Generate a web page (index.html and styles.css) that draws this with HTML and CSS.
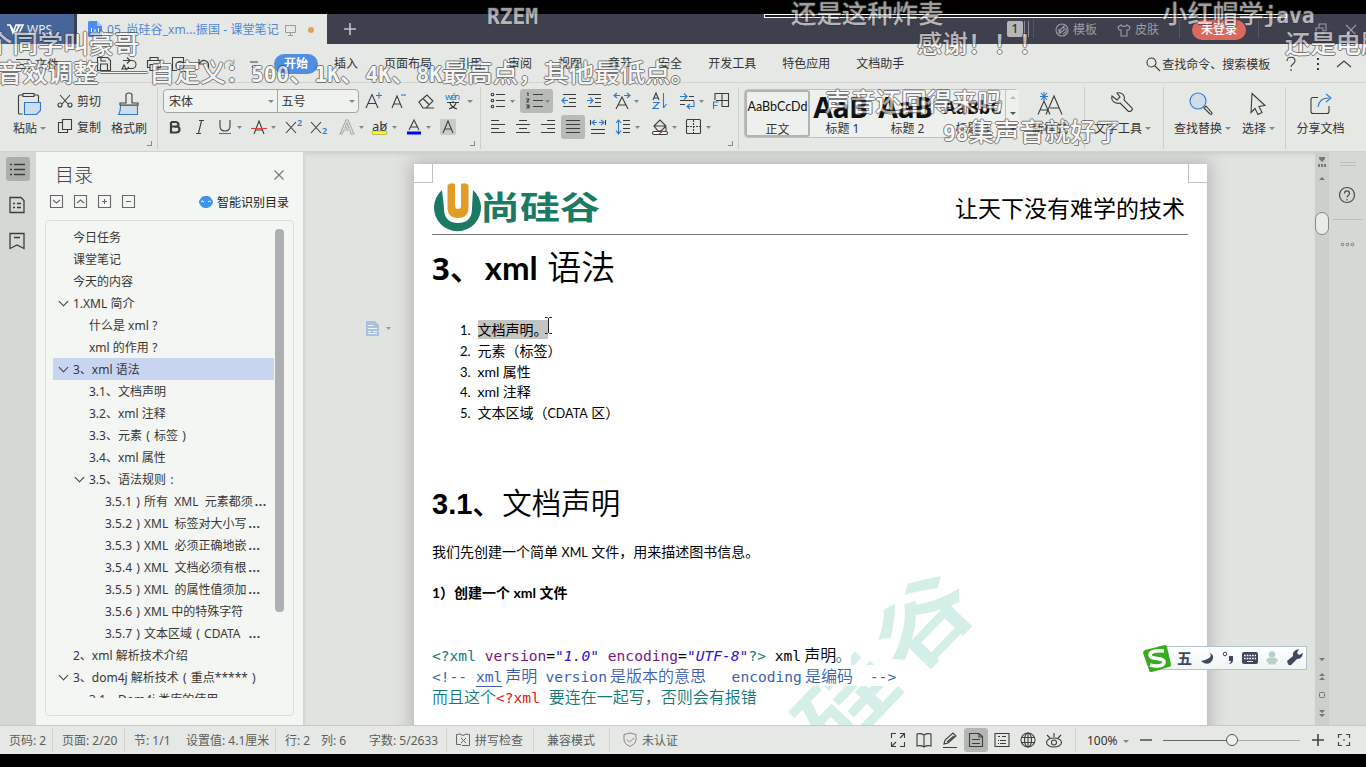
FILE: index.html
```html
<!DOCTYPE html>
<html lang="zh-CN">
<head>
<meta charset="utf-8">
<title>05_尚硅谷_xml - 课堂笔记</title>
<link rel="stylesheet" href="styles.css">
</head>
<body>
<div class="screen">
  <header class="titlebar">
    <div class="brand"><svg class="ic" viewBox="-12 -12 24 24"><path class="wl" d="M-8-4h3l3 8 3-8h3l-3 8M-5-4l5 8 5-8h3l-4 8"/></svg><span>WPS</span></div>
    <div class="doctab">
      <svg class="docicon" viewBox="0 0 14 16"><path fill="#4c8bf0" d="M1 0h8l5 5v11H1a1 1 0 0 1-1-1V1z"/><path fill="#a9c8fa" d="M9 0l5 5H9z"/><path d="M3.500 7v4.500h7V7M7 8v3" fill="none" stroke="#fff"/></svg>
      <span class="docname">05_尚硅谷_xm...振国 - 课堂笔记</span>
      <svg class="monitor" viewBox="0 0 12 12"><path d="M.5 1.500h10v7H.5zM5.500 8.500v2.500M3 11.500h5" fill="none" stroke="#999b99"/></svg>
      <i class="dirty"></i>
    </div>
    <svg class="plus" viewBox="0 0 12 12"><path d="M6 0v12M0 6h12" stroke="#c4c5c8" stroke-width="1.600"/></svg>
    <div class="titleright">
      <b class="badge">1</b><i class="bars"></i><i class="tsep"></i>
      <svg class="ic" viewBox="-12 -12 24 24"><circle r="6"/><path d="M-2 4v-4l4-4v4l-4 3M-3-1v4M4-2v4l-3 2"/></svg><span>模板</span>
      <svg class="ic shirt" viewBox="-12 -12 24 24"><path d="M-3-5l-3 2 1 3h2v6h6v-6h2l1-3-3-2q-3 3-6 0z"/></svg><span>皮肤</span>
      <i class="tsep s2"></i><b class="login">未登录</b><i class="tsep s3"></i>
      <svg class="ic restore" viewBox="-12 -12 24 24"><path d="M-5-2h7v7h-7zM-2-2v-4h7v7h-3"/></svg>
      <svg class="ic close" viewBox="-12 -12 24 24"><path d="M-5-5l10 10M5-5l-10 10"/></svg>
    </div>
  </header>

  <nav class="menubar">
    <svg class="ic" viewBox="-12 -12 24 24"><path d="M-7-4.500h14M-7 .5h14M-7 4.500h14"/></svg><span class="file">文件</span>
    <i class="msep"></i>
    <div class="quick">
      <svg class="ic" viewBox="-12 -12 24 24"><path d="M-6.500-6.500h10l3 3v10h-13zM-3.500 6v-6h7v6M-3-6v3h5"/></svg>
      <svg class="ic" viewBox="-12 -12 24 24"><path d="M-6-3.500h9a4 4 0 0 1 0 8h-4M-2-6.500l3 3-3 3M-5 1l-2 4h4zM-3 6l3-3"/></svg>
      <svg class="ic" viewBox="-12 -12 24 24"><path d="M-4-3v-3.500h8v3M-4 3.500h-2.500v-7h13v7h-2.500M-4 .5h8v6h-8z"/></svg>
      <svg class="ic" viewBox="-12 -12 24 24"><path d="M-2 6.500h-4.500v-13h11v6M3 5l4 3"/><circle cx="1" cy="1.500" r="4"/></svg>
      <svg class="ic" viewBox="-12 -12 24 24"><path d="M-5-5v5h5M-5 0q3-5 7-3t2 8"/></svg>
      <svg class="ic dim" viewBox="-12 -12 24 24"><path d="M5-5v5h-5M5 0q-3-5-7-3t-2 8"/></svg>
      <svg class="ic" viewBox="-12 -12 24 24"><path d="M-4-2h8M-2 2l2 2 2-2"/></svg>
    </div>
    <div class="tabs"><span class="on">开始</span><span>插入</span><span>页面布局</span><span>引用</span><span>审阅</span><span>视图</span><span>章节</span><span>安全</span><span>开发工具</span><span>特色应用</span><span>文档助手</span></div>
    <div class="search"><svg class="ic" viewBox="-12 -12 24 24"><circle cx="-1.500" cy="-1.500" r="4.500"/><path d="M2 2l5 5"/></svg><span>查找命令、搜索模板</span></div>
    <svg class="ic help" viewBox="-12 -12 24 24"><path d="M-4-3c0-5 8-5 8 0 0 3-4 3-4 6M0 5v2"/></svg>
    <svg class="ic dots" viewBox="-12 -12 24 24"><path d="M0-6v2M0-1v2M0 4v2" stroke-width="2"/></svg>
    <svg class="ic up" viewBox="-12 -12 24 24"><path d="M-7 3l7-6 7 6"/></svg>
  </nav>

  <section class="ribbon">
    <div class="group clip">
      <div class="big paste"><svg class="ic" viewBox="-12 -12 24 24"><path d="M-6-9h-3.500q-1 0-1 1v17q0 1 1 1h3M5-9h3.500q1 0 1 1v6M-6-10.500h11v3h-11z"/><path class="bl fl" d="M-4.500-1.500h16v8l-4 4h-12z"/></svg><span>粘贴<i class="caret"></i></span></div>
      <div class="small">
        <div><svg class="ic" viewBox="-12 -12 24 24"><path d="M-5-6l8 9M5-6l-8 9"/><circle cx="-5" cy="4" r="2"/><circle cx="5" cy="4" r="2"/></svg><span>剪切</span></div>
        <div><svg class="ic" viewBox="-12 -12 24 24"><path d="M-2.500-7.500h9v10h-9zM-2.500-4.500h-4v10h9V2.500"/></svg><span>复制</span></div>
      </div>
      <div class="big brush"><svg class="ic" viewBox="-12 -12 24 24"><path d="M-9 1v-2h6v-8q0-2 3-2t3 2v8h6v2z"/><path class="bl fl" d="M-8.500 1.500h17v9h-19q2-3 2-9z"/></svg><span>格式刷</span></div>
      <i class="corner"></i>
    </div>

    <div class="group font">
      <div class="line">
        <div class="combos"><span class="cn">宋体<i class="caret"></i></span><span>五号<i class="caret"></i></span></div>
        <div class="tools f1">
          <svg class="ic" viewBox="-12 -12 24 24"><path d="M-8 7L-2-6.500 4 7M-6 2.500h8"/><path class="bl" d="M2-5.500h6M5-8.500v6"/></svg>
          <svg class="ic" viewBox="-12 -12 24 24"><path d="M-7 7L-2-5 3 7M-5 3h6"/><path class="bl" d="M2-6h5"/></svg>
          <svg class="ic" viewBox="-12 -12 24 24"><path d="M-7 1l8-7 6 6-7 7h-3zM-3-2.500l6 6M-2 7h10"/></svg>
          <svg class="ic" viewBox="-12 -12 24 24"><text class="wen" x="-8" y="-1" textLength="15">wén</text><path d="M-6 1.500H6M0 0v2M-4 8q6-2 7-6M4 8q-6-2-7-6"/><path class="ct" d="M14-1h6l-3 3z"/></svg>
        </div>
      </div>
      <div class="tools f2">
        <svg class="ic" viewBox="-12 -12 24 24"><path stroke-width="2.200" d="M-4-5v10.500h5q3.500 0 3.500-3t-3-3h-5M-4-5h4q3.500 0 3.500 2.500T0 0"/></svg>
        <svg class="ic" viewBox="-12 -12 24 24"><path d="M-1-6.500h5M-4 6.500h5M1.500-6l-3 12"/></svg>
        <svg class="ic" viewBox="-12 -12 24 24"><path d="M-5-7v6q0 5 5 5t5-5v-6"/><path class="bl" d="M-6 6.500H6"/><path class="ct" d="M12-1h5l-2.500 3z"/></svg>
        <svg class="ic" viewBox="-12 -12 24 24"><path d="M-5 7L0-6 5 7M-3.500 3h7"/><path stroke="#d04a42" d="M-8 1.500H8"/><path class="ct" d="M12-1h5l-2.500 3z"/></svg>
        <svg class="ic" viewBox="-12 -12 24 24"><path d="M-7-5L3 6M3-5L-7 6"/><text class="num" x="4" y="-1">2</text></svg>
        <svg class="ic" viewBox="-12 -12 24 24"><path d="M-7-5L3 6M3-5L-7 6"/><text class="num" x="4" y="7">2</text></svg>
        <svg class="ic dim" viewBox="-12 -12 24 24"><path d="M-7 7L-1-7h2l6 14H4L3 3h-6l-2 4zM-2 1h4L0-4z"/><path class="ct" d="M12-1h5l-2.500 3z"/></svg>
        <svg class="ic" viewBox="-12 -12 24 24"><text class="abt" x="-8" y="4">ab</text><path d="M7-4L2 2"/><rect x="-8" y="4" width="15" height="3.500" rx="1.500" fill="#ff0" stroke="#777" stroke-width=".5"/><path class="ct" d="M12-1h5l-2.500 3z"/></svg>
        <svg class="ic" viewBox="-12 -12 24 24"><path d="M-5 3L0-7 5 3M-3.500 0h7"/><path stroke="#00f" stroke-width="3" d="M-7 6H7"/><path class="ct" d="M12-1h5l-2.500 3z"/></svg>
        <svg class="ic" viewBox="-12 -12 24 24"><rect x="-8" y="-8" width="16" height="16" rx="1" fill="#c9cbc8" stroke="none"/><path d="M-5 6L0-6 5 6M-3.500 2h7"/></svg>
      </div>
      <i class="corner"></i>
    </div>

    <div class="group para">
      <div class="tools p1">
        <svg class="ic" viewBox="-12 -12 24 24"><path d="M-2-6.500h9M-2-.5h9M-2 5.500h9"/><circle cx="-5.500" cy="-6.500" r="1.300"/><circle cx="-5.500" cy="-.5" r="1.300"/><circle cx="-5.500" cy="5.500" r="1.300"/><path class="ct" d="M12-1h5l-2.500 3z"/></svg>
        <span class="pressed wide"><svg class="ic" viewBox="-12 -12 24 24"><path d="M-4-6.500h10M-4-.5h10M-4 5.500h10M-10-8h1v3M-11-2h3l-2 3h2M-11 4h3v3h-3M-10 5.500h2"/><path class="ct" d="M8-1h5l-2.500 3z"/></svg></span>
        <svg class="ic" viewBox="-12 -12 24 24"><path d="M-6-6.500H7M0-2.500h7M0 1.500h7M-6 5.500H7"/><path class="bl" d="M-1-.5h-6M-4-3.500l-3 3 3 3"/></svg>
        <svg class="ic" viewBox="-12 -12 24 24"><path d="M-6-6.500H7M1-2.500h6M1 1.500h6M-6 5.500H7"/><path class="bl" d="M-7-.5h6M-4-3.500l3 3-3 3"/></svg>
        <svg class="ic" viewBox="-12 -12 24 24"><path d="M-6 8L0-4 6 8M-4 4h8"/><path class="bl" d="M-2-5.500h-6M-5-8l-3 2.500L-5-3M2-5.500h6M5-8l3 2.500L5-3"/><path class="ct" d="M12-1h5l-2.500 3z"/></svg>
        <svg class="ic" viewBox="-12 -12 24 24"><path d="M-6-1l3-7 3 7M-5-3h4"/><path class="bl" d="M-6 1.500h6l-6 6h6M4.500-8v15M4.500 7l3-4"/></svg>
        <svg class="ic" viewBox="-12 -12 24 24"><path d="M2-4.500h5M-7-.5H7M-7 3.500h5"/><path class="bl" d="M-7-4.500h7M-3-7.500l3 3-3 3M7 0v5.500H0M3 3L0 5.500 3 8"/><path class="ct" d="M12-1h5l-2.500 3z"/></svg>
        <svg class="ic" viewBox="-12 -12 24 24"><path d="M-6-1v-6.500H7.500v13H1M1-7v13M-5-.5H7"/><path class="bl" d="M-7.500 8v-7h5M-7.500 4.500h4"/></svg>
      </div>
      <div class="tools p2">
        <svg class="ic" viewBox="-12 -12 24 24"><path d="M-7-6.500h8M-7-2.500H7M-7 1.500h8M-7 5.500H7"/></svg>
        <svg class="ic" viewBox="-12 -12 24 24"><path d="M-4-6.500h8M-7-2.500H7M-4 1.500h8M-7 5.500H7"/></svg>
        <svg class="ic" viewBox="-12 -12 24 24"><path d="M-1-6.500h8M-7-2.500H7M-1 1.500h8M-7 5.500H7"/></svg>
        <span class="pressed"><svg class="ic" viewBox="-12 -12 24 24"><path d="M-7-6.500H7M-7-2.500H7M-7 1.500H7M-7 5.500H7"/></svg></span>
        <svg class="ic" viewBox="-12 -12 24 24"><path d="M-7.500-7v5M7.500-7v5M-7 2.500H7M-7 6.500H7"/><path class="bl" d="M-1-4.500h-5M-3-7l-3 2.500L-3-2M1-4.500h5M3-7l3 2.500L3-2"/></svg>
        <svg class="ic" viewBox="-12 -12 24 24"><path d="M0-6.500h7M0-2.500h7M0 1.500h7M0 5.500h7"/><path class="bl" d="M-4.500-7V7M-7-4l2.500-3L-2-4M-7 3.500L-4.500 7-2 3.500"/><path class="ct" d="M12-1h5l-2.500 3z"/></svg>
        <svg class="ic" viewBox="-12 -12 24 24"><path d="M-6-1l6-6 6 6-5 5h-3zM-6-1H6M6 0v4"/><rect x="-7.500" y="4.500" width="15" height="3" rx="1.500" fill="#fff"/><path stroke="#d04a42" d="M-1 7l4-3"/><path class="ct" d="M12-1h5l-2.500 3z"/></svg>
        <svg class="ic" viewBox="-12 -12 24 24"><rect x="-6.500" y="-7.500" width="14" height="14" rx="1"/><path stroke-dasharray="2 1" d="M.5-7V7M-6-.5H7"/><path class="ct" d="M13-1h5l-2.500 3z"/></svg>
      </div>
      <i class="corner"></i>
    </div>

    <div class="group styles">
      <div class="gallery">
        <div class="st sel"><b class="s0">AaBbCcDd</b><span>正文</span></div>
        <div class="st"><b class="s1">AaB</b><span>标题 1</span></div>
        <div class="st"><b class="s1">AaB</b><span>标题 2</span></div>
        <div class="st last"><b class="h3s">AaBbC</b><span>标题 3</span></div>
        <div class="scr"><i class="tri upt"></i><i class="tri"></i><i class="tri"></i></div>
      </div>
      <div class="big newst"><svg class="ic" viewBox="-12 -12 24 24"><path d="M-12 10.500L-6-3l6 13.500M-10 6h8M-4 10.500L4-8l8 18.500M0 4h9"/><path class="bl" d="M-6-12v9M-10-7.500h8M-9-11l6 7M-3-11l-6 7"/></svg><span>新样式</span></div>
      <i class="corner"></i>
    </div>
    <div class="group tool"><div class="big"><svg class="ic" viewBox="-15 -12 24 24"><path d="M-9-8l5 4 3-3-3-4q5-1 7 3 1 2 0 4l8 8q1 2-1 3t-3 0l-8-8q-3 1-6-1t-2-6z"/></svg><span>文字工具<i class="caret"></i></span></div></div>
    <div class="group find">
      <div class="big"><svg class="ic" viewBox="-15 -12 24 24"><circle class="bl fl" cx="-3" cy="-3" r="8"/><path d="M3 4l6 6q2 1 2-1l-6-7z"/></svg><span>查找替换<i class="caret"></i></span></div>
      <div class="big pick"><svg class="ic" viewBox="-16 -12 24 24"><path d="M-6-10.500l13 12-6 1 3 6-4 2-3-6-4 4z"/></svg><span>选择<i class="caret"></i></span></div>
    </div>
    <div class="group share"><div class="big"><svg class="ic" viewBox="-12 -12 24 24"><path d="M-3-6.500h-5q-2 0-2 2v12q0 2 2 2h14q2 0 2-2V2"/><path class="bl" d="M-3 3q1-9 11-9M5-10l5 4-5 4"/></svg><span>分享文档</span></div></div>
  </section>

  <main class="work">
    <aside class="rail">
      <span class="railon"><svg class="ic" viewBox="-12 -12 24 24"><path d="M-4-4.500H7M-4 .5H7M-4 5.500H7M-8-4.500h2M-8 .5h2M-8 5.500h2" stroke-width="1.300"/></svg></span>
      <svg class="ic" viewBox="-12 -12 24 24"><path d="M-7-7.500H4l3 3v12H-7zM-4 -1.500h2M0-1.500h4M-4 2.500h2M0 2.500h4" stroke-width="1.300"/></svg>
      <svg class="ic" viewBox="-12 -12 24 24"><path d="M-7 7.500v-15H7v15L0 4zM-3-3.500h6" stroke-width="1.300"/></svg>
    </aside>
    <aside class="outline">
      <div class="ohead"><h2>目录</h2><svg class="ic" viewBox="-12 -12 24 24"><path d="M-4.500-4.500l9 9M4.500-4.500l-9 9" stroke="#777"/></svg></div>
      <div class="obar">
        <svg class="ic" viewBox="-12 -12 24 24"><path d="M-6.500-6.500h12v12h-12zM-4-2l3.500 3L3-2"/></svg>
        <svg class="ic" viewBox="-12 -12 24 24"><path d="M-6.500-6.500h12v12h-12zM-4 1l3.500-3L3 1"/></svg>
        <svg class="ic" viewBox="-12 -12 24 24"><path d="M-6.500-6.500h12v12h-12zM-3-.5h5M-.5-3v5"/></svg>
        <svg class="ic" viewBox="-12 -12 24 24"><path d="M-6.500-6.500h12v12h-12zM-3-.5h5"/></svg>
        <div class="smart"><svg viewBox="0 0 14 12"><rect x="1" width="12" height="12" rx="5" fill="#4193ea"/><rect y="3" width="14" height="6" rx="3" fill="#4193ea"/><path d="M2 6q1.500-2 3 0M9 6q1.500-2 3 0" fill="none" stroke="#fff"/></svg><span>智能识别目录</span></div>
      </div>
      <div class="tree">
        <ul>
          <li>今日任务</li><li>课堂笔记</li><li>今天的内容</li>
          <li class="open">1.XML 简介</li><li class="l2">什么是 xml<q>?</q></li><li class="l2">xml 的作用<q>?</q></li>
          <li class="open cur">3、xml 语法</li><li class="l2">3.1、文档声明</li><li class="l2">3.2、xml 注释</li><li class="l2">3.3、元素<q>(</q>标签<q>)</q></li><li class="l2">3.4、xml 属性</li>
          <li class="l2 open">3.5、语法规则<q>:</q></li>
          <li class="l3">3.5.1<q>)</q>所有&nbsp; XML&nbsp; 元素都须<b>...</b></li><li class="l3">3.5.2<q>)</q>XML&nbsp; 标签对大小写<b>...</b></li><li class="l3">3.5.3<q>)</q>XML&nbsp; 必须正确地嵌<b>...</b></li><li class="l3">3.5.4<q>)</q>XML&nbsp; 文档必须有根<b>...</b></li><li class="l3">3.5.5<q>)</q>XML&nbsp; 的属性值须加<b>...</b></li><li class="l3">3.5.6<q>)</q>XML 中的特殊字符</li><li class="l3">3.5.7<q>)</q>文本区域<q>(</q>CDATA&nbsp; <b>...</b></li>
          <li>2、xml 解析技术介绍</li><li class="open">3、dom4j 解析技术<q>(</q>重点*****<q>)</q></li><li class="l2">3.1、Dom4j 类库的使用</li>
        </ul>
        <div class="track"><i></i></div>
      </div>
    </aside>
    <div class="canvas">
      <div class="gutter"><svg viewBox="0 0 26 15"><path fill="#a9c0df" d="M0 0h9l4 4v11H0z"/><path d="M2 4.500h5M2 7.500h9M2 10.500h3M7 10.500h4M2 12.500h9" stroke="#eef3fa"/><path fill="#999" d="M20 6h5l-2.500 3z"/></svg></div>
      <article class="page">
        <i class="crop cl"></i><i class="crop cr"></i>
        <div class="mark">硅谷</div>
        <div class="phead">
          <svg class="ulogo" viewBox="0 0 48 50"><path fill="#1b7a63" d="M8 8a23.500 23.500 0 1 0 31 0l-1 18q0 15-14 15T10 26z"/><path fill="#e19c26" d="M13.500 3q4-3 7.500-1v22q0 3 3 3t3-3V2q4-2 7.500 1v22q0 11-10.500 11t-10.500-11z"/></svg>
          <span class="cname">尚硅谷</span><span class="slogan">让天下没有难学的技术</span>
        </div>
        <h1><b>3</b><i>、</i><b>xml</b> <span>语法</span></h1>
        <ol>
          <li><i>1.</i><mark>文档声明。</mark></li><li><i>2.</i>元素（标签）</li><li><i>3.</i>xml 属性</li><li><i>4.</i>xml 注释</li><li><i>5.</i>文本区域（<small>CDATA</small> 区）</li>
        </ol>
        <svg class="ibeam" viewBox="0 0 9 17"><path d="M1 .5h2.500l1 1 1-1H8M1 16.500h2.500l1-1 1 1H8M4.500 1v15" fill="none" stroke="#222"/></svg>
        <h2><b>3.1</b><i>、</i>文档声明</h2>
        <p>我们先创建一个简单 <small>XML</small> 文件，用来描述图书信息。</p>
        <h3>1）创建一个 xml 文件</h3>
        <pre><span class="ln"><span class="g">&lt;?xml</span> <span class="p">version</span>=<em>"1.0"</em> <span class="p">encoding</span>=<em>"UTF-8"</em><span class="g">?&gt;</span> xml<u class="gap">声明</u><u class="g">。</u></span>
<span class="ln b">&lt;!-- <s>xml</s><u class="gap">声明</u> version<u class="gap">是版本的意思</u>   encoding<u class="gap">是编码</u>  --&gt;</span>
<span class="ln g"><u>而且这个</u><span class="r">&lt;?xml</span> <u>要连在一起写，否则会有报错</u></span></pre>
      </article>
    </div>
    <div class="vscroll">
      <svg viewBox="0 0 14 573"><g fill="#777977"><path d="M4 5h6v2l-3 3-3-3zM3 12h2v3H3zM6 12h2v3H6zM9 12h2v3H9zM4 28l3-3 3 3zM4 506h6l-3 3zM4 524l3-3 3 3zM4 528l3-3 3 3zM4 558h6l-3 3zM4 562h6l-3 3z"/></g><rect x=".5" y="60.500" width="13" height="22" rx="6.500" fill="#e9ebe8" stroke="#858785"/><rect x="4.500" y="540.500" width="5" height="5" rx="1" fill="none" stroke="#777"/></svg>
    </div>
    <aside class="right">
      <svg viewBox="0 0 37 100"><path d="M11 10.500h16M11 13.500h16M4 67.500h30" stroke="#bcbebc"/><g fill="none" stroke="#4a4c4a" stroke-width="1.200"><circle cx="18" cy="43" r="7.500"/><path d="M15.500 41.500c0-3.500 5-3.500 5 0 0 2-2.500 2-2.500 4M18 47v1.500"/></g><g fill="none" stroke="#777"><circle cx="13.500" cy="92.500" r="1.300"/><circle cx="18.500" cy="92.500" r="1.300"/><circle cx="23.500" cy="92.500" r="1.300"/></g></svg>
    </aside>
  </main>

  <footer class="status">
    <span>页码: 2</span><span>页面: 2/20</span><span>节: 1/1</span><span class="nb">设置值: 4.1厘米</span><span>行: 2</span><span class="nb">列: 6</span><span class="nb">字数: 5/2633</span>
    <span><svg viewBox="0 0 14 14"><path d="M7 2.500Q4 0 .5 1.500v10H5M7 2.500Q10 0 13.500 1.500v11H6M5 5l5 5M10 5l-5 5" fill="none" stroke="#666"/></svg>拼写检查</span><span>兼容模式</span>
    <span><svg viewBox="0 0 14 14"><path d="M1 1.500L7 0l6 1.500V7q0 4-6 6.500Q1 11 1 7zM4 6.500L6.500 9 11 5" fill="none" stroke="#888"/></svg>未认证</span>
    <div class="views">
      <svg class="ic" viewBox="-12 -12 24 24"><path d="M-6.500-2v-4.500H-2M6.500 2v4.500H2M2-6.500h4.500V-2M-6.500 2v4.500H-2M6-6L2-2M-6 6l4-4"/></svg>
      <svg class="ic" viewBox="-12 -12 24 24"><path d="M0-5q-3-2-7-1V6q4-1 7 1 3-2 7-1V-6q-4-1-7 1zV7"/></svg>
      <svg class="ic" viewBox="-12 -12 24 24"><path d="M-7 7.500H7M-6 4l1-4 8-7 3 3-8 7zM-3 2l7-6"/></svg>
      <span class="vp"><svg class="ic" viewBox="-12 -12 24 24"><path d="M-6.500-6.500H3l3.500 3v10h-13zM3-6v3h3M-4-.5h8M-4 3.500h8"/></svg></span>
      <svg class="ic" viewBox="-12 -12 24 24"><path d="M-7-6.500H7v13H-7zM-4-3.500h2M0-3.500h4M-2 .5h6M-2 3.500h6M-4 .5h1M-4 3.500h1"/></svg>
      <svg class="ic" viewBox="-12 -12 24 24"><circle r="7"/><ellipse rx="3.500" ry="7"/><path d="M-7-2.500H7M-7 2.500H7M0-7V7"/></svg>
      <svg class="ic" viewBox="-12 -12 24 24"><ellipse cy="2.500" rx="7.500" ry="4.500"/><circle cy="2.500" r="2.500"/><path d="M0-7v4M-7-5l3 3M7-5L4-2"/></svg>
    </div>
    <span class="zoom">100%<i class="caret"></i></span>
    <svg class="slider" viewBox="0 0 214 16"><path d="M0 8h12" stroke="#555" stroke-width="1.600"/><path d="M23 8.500h63" stroke="#666"/><path d="M98 8.500h62" stroke="#aaa"/><circle cx="92" cy="8" r="5.500" fill="#eef0ed" stroke="#555"/><path d="M172 8h12M178 2v12" stroke="#444" stroke-width="1.600"/><path d="M198.500 6V2.500h3.500M206 2.500h3.500V6M209.500 10v3.500H206M202 13.500h-3.500V10M203 8h2" fill="none" stroke="#444" stroke-width="1.200"/></svg>
  </footer>

  <div class="ime">
    <svg class="sogou" viewBox="0 0 28 27"><path fill="#35ad1c" d="M2 5L22 0q2 0 2 2l4 17q0 3-2 3L9 27q-3 0-3-2L0 8q0-2 2-3z"/><path d="M21 6q-14-1-14 4c0 5 14 2 14 7 0 4-7 5-14 3" fill="none" stroke="#fff" stroke-width="3.500"/></svg>
    <b>五</b>
    <svg class="imeic" viewBox="0 0 105 16"><g fill="#41475f"><path d="M9 2q6 6-8 9 4 4 9 2 7-6-1-11z"/><path d="M29 6h4v5q-1 3-4 3 2-2 2-3h-2z"/><path d="M88 14l-1-3 6-5q-1-4 3-6l3-1-2 4 2 2 4-2q-1 6-6 6l-6 6q-2 1-3-1z"/></g><circle cx="25" cy="4" r="1.800" fill="none" stroke="#41475f"/><rect x="42" y="2" width="16" height="12" rx="2" fill="#41475f"/><path d="M44 5.500h12M44 8.500h12" stroke="#fff" stroke-width="1.500" stroke-dasharray="1.700 1"/><path d="M47 11.500h6" stroke="#fff"/><circle cx="72" cy="4.500" r="3.200" fill="#b9d0ca"/><path fill="#b9d0ca" d="M66 11q1-4 6-3 5-1 6 3l-2 1v2q-4 1-8 0v-2z"/></svg>
  </div>

  <i class="seek"></i>
  <div class="dm d1"><b>RZEM</b></div><div class="dm d2">还是这种炸麦</div><div class="dm d3">小红帽学<b>java</b></div>
  <div class="dm d4">个同学叫豪哥</div><div class="dm d5">感谢！！！</div><div class="dm d6">还是电脑</div>
  <div class="dm d7">音效调整——自定义：<b>500</b>、<b>1K</b>、<b>4K</b>、<b>8K</b>最高点，其他最低点。</div>
  <div class="dm d8">声音还回得来吗</div><div class="dm d9"><b>98</b>集声音就好了</div>
</div>
</body>
</html>
```
FILE: styles.css
```css
* { box-sizing: border-box; }
body { margin: 0; background: #000; color: #333; font: 12px/18px "Noto Sans", "Noto Sans CJK SC", sans-serif; }
h1, h2, h3, p, ul, ol, pre { margin: 0; padding: 0; font-weight: normal; }
ul, ol { list-style: none; }
i { font-style: normal; }
q { display: inline-block; width: 12px; text-align: center; quotes: none; }
.screen { position: relative; width: 1366px; height: 767px; overflow: hidden; padding-top: 14px; white-space: nowrap; }
svg { display: block; flex: none; overflow: visible; }
.ic { width: 24px; height: 24px; fill: none; stroke: #3c3e3c; stroke-width: 1.1; }
.ic .bl { stroke: #2f79cc; }
.ic .fl { fill: #cfdcea; }
.ic .ct { fill: #858785; stroke: none; }
.ic text { stroke: none; }
.dim { stroke: #a8aaa8; }
.caret { display: inline-block; border: 3px solid transparent; border-top-color: #858785; border-bottom: 0; vertical-align: 3px; margin-left: 3px; }

.titlebar { display: flex; height: 30px; background: #3e404e; align-items: center; }
.titlebar span { padding-top: 2px; }
.brand { display: flex; align-items: center; width: 74px; height: 30px; margin-right: 3px; padding-left: 3px; background: #47659a; color: #e8ecf4; }
.brand .wl { stroke: #fff; stroke-width: 1.6; }
.doctab { display: flex; align-items: center; width: 250px; height: 30px; padding-left: 11px; background: #e6e8e5; }
.docicon { width: 14px; height: 16px; margin-right: 5px; }
.docname { width: 178px; color: #4f86d2; letter-spacing: .1px; }
.monitor { width: 12px; height: 12px; margin-top: 2px; }
.dirty { width: 6px; height: 6px; margin: 2px 0 0 11px; border-radius: 50%; background: #e0a060; }
.plus { width: 12px; height: 12px; margin-left: 17px; }
.titleright { display: flex; align-items: center; margin-left: 651px; color: #9b9ca4; height: 30px; }
.titleright .ic { stroke: #9b9ca4; margin-top: 2px; }
.badge { width: 16px; height: 16px; border-radius: 2px; background: #b5b6b8; color: #333; font-weight: 500; line-height: 16px; text-align: center; }
.bars { width: 5px; height: 16px; margin-left: 1px; border: solid #8a8b92; border-width: 0 1px; }
.tsep { width: 1px; height: 18px; margin: 0 16px 0 4px; background: #545664; }
.titleright .shirt { margin-left: 15px; }
.titleright > .ic { margin-right: -1px; }
.s2 { margin: 0 12px 0 20px; }
.login { width: 54px; height: 20px; margin-top: 2px; border-radius: 10px; background: #da6a5f; color: #fff; font-weight: 500; line-height: 20px; text-align: center; }
.s3 { margin: 0 50px 0 12px; }
.titleright .close { margin-left: 7px; }

.menubar { display: flex; align-items: center; height: 39px; background: #e6e8e5; border-bottom: 1px solid #d2d4d1; padding: 1px 0 0 11px; }
.menubar > span, .search > span, .tabs span:not(.on) { position: relative; top: 1px; }
.file { width: 51px; }
.msep { width: 1px; height: 14px; background: #c9cbc8; margin-right: 5px; }
.quick { display: flex; gap: 1px; width: 192px; }
.tabs { display: flex; gap: 26px; }
.tabs .on { margin: 0 -10px; padding: 1px 10px; border-radius: 10px; background: #4f8ee0; color: #fff; font-weight: 600; }
.search { display: flex; align-items: center; margin-left: 237px; }
.search .ic { margin-right: -3px; }
.help { margin-left: 9px; }
.dots { margin-left: 3px; }
.up { margin-left: 2px; }

.ribbon { display: flex; height: 68px; background: #e6e8e5; }
.group { position: relative; padding-top: 6px; flex: none; }
.group::after { content: ""; position: absolute; right: 0; top: 4px; width: 1px; height: 62px; background: #cdcfcc; }
.corner { position: absolute; right: 6px; bottom: 5px; width: 5px; height: 5px; border: solid #888; border-width: 0 1px 1px 0; }
.big { display: flex; flex-direction: column; align-items: center; padding-top: 3px; gap: 4px; }
.big > span { position: relative; }
.big .caret { position: absolute; right: -9px; top: 7px; }
.clip { display: flex; width: 158px; padding-left: 13px; }
.paste { width: 32px; }
.paste > span { margin-left: -8px; }
.small { width: 66px; padding-left: 8px; display: grid; grid-template-rows: 24px 24px; gap: 2px; }
.small div { display: flex; align-items: center; }
.small span { padding-top: 2px; }
.font { width: 323px; padding-left: 5px; }
.line { display: flex; height: 24px; }
.combos { display: flex; width: 196px; height: 24px; margin-right: 1px; border: 1px solid #a4a6a4; border-radius: 4px; background: #f0f2ef; }
.combos span { position: relative; width: 80px; line-height: 24px; padding-left: 3px; }
.combos .cn { width: 115px; border-right: 1px solid #a4a6a4; padding-left: 5px; }
.combos .caret { position: absolute; right: 3px; top: 10px; }
.tools { display: grid; height: 24px; align-items: center; justify-items: center; }
.f1 { grid-template-columns: 28px 22px 32px 22px; }
.f2 { grid-template-columns: 24px 26px 24px 44px 24px 26px 32px 34px 34px 34px; margin-top: 2px; }
.wen { font-size: 9.500px; fill: #2f79cc; }
.num { font-size: 9px; fill: #2f79cc; font-weight: 600; }
.abt { font-size: 13px; fill: #333; }
.para { width: 258px; }
.p1 { grid-template-columns: 34px 43px 22px 28px 28px 46px 10px 58px; }
.p2 { grid-template-columns: 34px 16px 34px 16px 34px 16px 58px 8px; margin-top: 2px; }
.pressed { display: flex; justify-content: center; width: 24px; height: 24px; border-radius: 3px; background: #b8bab7; }
.wide { width: 33px; }
.styles { display: flex; width: 346px; padding-left: 5px; }
.gallery { display: flex; width: 275px; height: 49px; border: 1px solid #c0c2bf; border-radius: 4px; background: #eef0ed; }
.st { width: 65px; height: 47px; text-align: center; flex: none; color: #333; }
.st b { display: block; height: 30px; line-height: 34px; color: #111; }
.st span { display: block; line-height: 18px; }
.st.sel { border: 2px solid #b2b4b1; border-radius: 3px; }
.st.sel b { height: 28px; margin: 0 -5px; font: 400 12.500px/29px Lato, sans-serif; }
.st.sel span { line-height: 19px; }
.st .s1 { font: 700 28.500px/34px "Open Sans", sans-serif; letter-spacing: -.5px; margin-left: -4px; }
.st .h3s { font: 700 18px/34px "Open Sans", sans-serif; }
.scr { width: 14px; flex: none; border-left: 1px solid #c0c2bf; background: #eef0ed; display: grid; justify-items: center; align-items: center; }
.tri { border: 3px solid transparent; border-top-color: #555; border-bottom: 0; }
.upt { border: 3px solid transparent; border-bottom-color: #bbb; border-top: 0; }
.newst { width: 55px; padding-left: 7px; }
.tool { width: 79px; padding-right: 13px; }
.find { display: flex; width: 122px; padding-left: 10px; }
.pick { margin-left: 20px; }
.share { width: 80px; padding-right: 11px; }
.share::after { display: none; }

.work { display: flex; height: 574px; border-top: 1px solid #d0d2cf; }
.rail { width: 36px; background: #d6d8d5; padding: 5px 0 0 6px; display: flex; flex-direction: column; gap: 12px; }
.rail > .ic { margin-left: -1px; }
.railon { width: 24px; height: 24px; border-radius: 3px; background: #acaeab; }
.outline { width: 269px; background: #f3f6f2; border-right: 2px solid #d5d7d4; padding: 6px 9px 0 9px; }
.ohead { display: flex; align-items: center; justify-content: space-between; height: 34px; padding-left: 10px; }
.ohead h2 { font-size: 19px; line-height: 30px; color: #444; font-weight: 300; }
.ohead .ic { margin-right: 3px; }
.obar { display: flex; height: 20px; align-items: center; }
.obar .ic { stroke: #666; }
.smart { display: flex; align-items: center; gap: 4px; margin-left: 58px; color: #222; }
.smart svg { width: 14px; height: 12px; }
.smart span { padding-top: 2px; }
.tree { position: relative; height: 496px; margin-top: 8px; border: 1px solid #dcdfdb; border-radius: 4px; padding: 5px 0 0 7px; display: flex; }
.tree ul { width: 222px; height: 472px; overflow: hidden; color: #3a3634; border-right: 1px solid #f3f6f2; }
.tree li { position: relative; height: 22px; line-height: 24px; padding-left: 20px; }
.tree li.l2 { padding-left: 36px; }
.tree li.l3 { padding-left: 52px; }
.tree li b { margin-left: 2px; letter-spacing: .6px; }
.tree li.cur { background: #c7d5f1; }
.tree li.open::before { content: ""; position: absolute; left: 7px; top: 6px; width: 6px; height: 6px; border: solid #444; border-width: 0 1.300px 1.300px 0; transform: rotate(45deg); }
.tree li.l2.open::before { left: 23px; }
.track { width: 9px; padding-top: 3px; }
.track i { display: block; height: 383px; border-radius: 4px; background: #adafb2; }

.canvas { display: flex; flex: 1; background: #e1e3e0; overflow: hidden; padding-top: 12px; box-shadow: inset 0 4px 5px -3px #c4c6c3; }
.gutter { width: 109px; padding: 157px 0 0 61px; }
.gutter svg { width: 26px; height: 15px; }
.page { position: relative; width: 793px; height: 600px; padding: 0 19px 0 18px; background: #fefffe; color: #000; box-shadow: 0 0 16px 3px #b4b6b3; font-family: Lato, "Noto Sans CJK SC", sans-serif; }
.crop { position: absolute; top: 0; width: 19px; height: 19px; border: 1px solid #c0c2c0; border-top: 0; }
.cl { left: 0; border-left: 0; }
.cr { right: 0; border-right: 0; }
.mark { position: absolute; left: 362px; top: 438px; width: 224px; line-height: 112px; font-size: 102px; letter-spacing: 10px; font-weight: 700; color: #d4efe8; transform: rotate(-46deg) scaleY(.8); }
.phead { display: flex; height: 71px; border-bottom: 1px solid #777; }
.ulogo { width: 48px; height: 50px; margin: 18px 0 0 2px; }
.cname { margin-top: 22px; margin-left: -2px; font-size: 40px; line-height: 40px; font-weight: 700; color: #1b7a63; width: 122px; transform: scaleY(.8); }
.slogan { margin: 24px 3px 0 auto; font-size: 23px; line-height: 40px; }
.page h1 { height: 66px; line-height: 64px; font-size: 33px; margin-bottom: 18px; }
.page h1 b { font-weight: 700; }
.page h1 b:first-child { font-family: "Open Sans", sans-serif; font-size: 31px; }
.page h1 i { display: inline-block; width: 35px; font-weight: 500; }
.page h1 span { font-size: 34px; margin-left: 1px; }
.page h1 span, .page h2 { font-weight: 350; }
.page ol { font-size: 14px; height: 153px; }
.page ol li { height: 20.800px; line-height: 21px; padding-left: 28px; }
.page ol i { display: inline-block; width: 17.500px; font-size: 13px; }
.page small { font-size: 12.500px; }
.page mark { background: #c3c5c3; color: #000; padding: 1px 0; }
.ibeam { position: absolute; left: 130px; top: 153px; width: 9px; height: 17px; }
.page h2 { height: 64px; line-height: 62px; font-size: 29.500px; }
.page h2 b { font-family: "Liberation Sans", sans-serif; font-weight: 700; font-size: 29px; }
.page h2 i { display: inline-block; width: 30px; font-weight: 500; }
.page p { height: 32px; line-height: 31px; font-size: 14px; }
.page h3 { height: 50px; line-height: 50px; font-size: 14px; font-weight: 700; margin-bottom: 26px; }
.page pre { position: relative; font: 14.600px/21px "DejaVu Sans Mono", "Noto Sans CJK SC", monospace; }
.page pre .ln { display: block; width: max-content; height: 21px; margin-bottom: -21px; background: #fefffe; }
.page pre u { text-decoration: none; font: 350 16px/20px "Noto Sans CJK SC", sans-serif; }
.page pre .gap { margin: 0 -.7px 0 3px; }
.page pre s { text-decoration: underline; text-underline-offset: 4px; }
.g { color: #147a78; }
.p { color: #7a1482; }
.page em { color: #2a12dc; }
.b { color: #3e5fb0; }
.r { color: #e01818; }
.vscroll { width: 14px; background: #cdcfcc; }
.vscroll svg { width: 14px; height: 573px; }
.right { width: 37px; background: #d6d8d5; }
.right svg { width: 37px; height: 100px; }

.status { display: grid; grid-template-columns: 52px 72px 52px 99px 36px 48px 87px 87px 76px 277px 189px 66px 214px; align-items: center; height: 29px; border-top: 1px solid #c8cac7; background: #e6e8e5; color: #5c5e5c; }
.status > span { position: relative; display: flex; align-items: center; padding: 2px 0 0 10px; height: 24px; }
.status > span:first-child { padding-left: 9px; }
.status > span svg { width: 14px; height: 14px; margin: -2px 5px 0 0; }
.status > span:not(.nb):not(:first-child)::before { content: ""; position: absolute; left: 0; top: 0; width: 1px; height: 24px; background: #d2d4d1; }
.status > span:nth-child(9), .status > span:nth-child(10) { padding-left: 14px; }
.views { display: flex; gap: 2px; }
.vp { width: 24px; height: 24px; border-radius: 3px; background: #b5b7b4; }
.status .zoom { padding-left: 12px; color: #333; }
.status .zoom .caret { margin-left: 5px; }
.slider { width: 214px; height: 16px; margin-left: -1px; }

.ime { position: absolute; left: 1158px; top: 646px; width: 149px; height: 24px; display: flex; align-items: center; border: 1px solid #b0c4cf; background: linear-gradient(#fff, #eff5f4); }
.sogou { width: 28px; height: 27px; margin-left: -16px; }
.ime b { width: 18px; margin-left: 6px; font: 700 15px/20px "Noto Sans CJK SC", sans-serif; color: #41475f; }
.imeic { width: 105px; height: 16px; margin-left: 5px; }
.seek { position: absolute; left: 764px; top: 14px; width: 523px; height: 4px; border: 1px solid #f4fff8; background: #1c1e24; }
.dm { position: absolute; height: 30px; opacity: .62; color: #fff; font: 500 25.400px/30px "Noto Sans CJK SC", sans-serif; text-shadow: 1px 0 #333, -1px 0 #333, 0 1px #333, 0 -1px #333; }
.dm b { font: 700 21.200px/20px "DejaVu Sans Mono", monospace; }
.d1 { left: 487px; top: -2px; }
.d2 { left: 791px; top: -3px; }
.d3 { left: 1162px; top: -3px; }
.d4 { left: -13px; top: 27px; }
.d5 { left: 917px; top: 27px; }
.d6 { left: 1285px; top: 27px; }
.d7 { left: -3px; top: 56px; }
.d8 { left: 825px; top: 85px; }
.d9 { left: 943px; top: 115px; }
```
